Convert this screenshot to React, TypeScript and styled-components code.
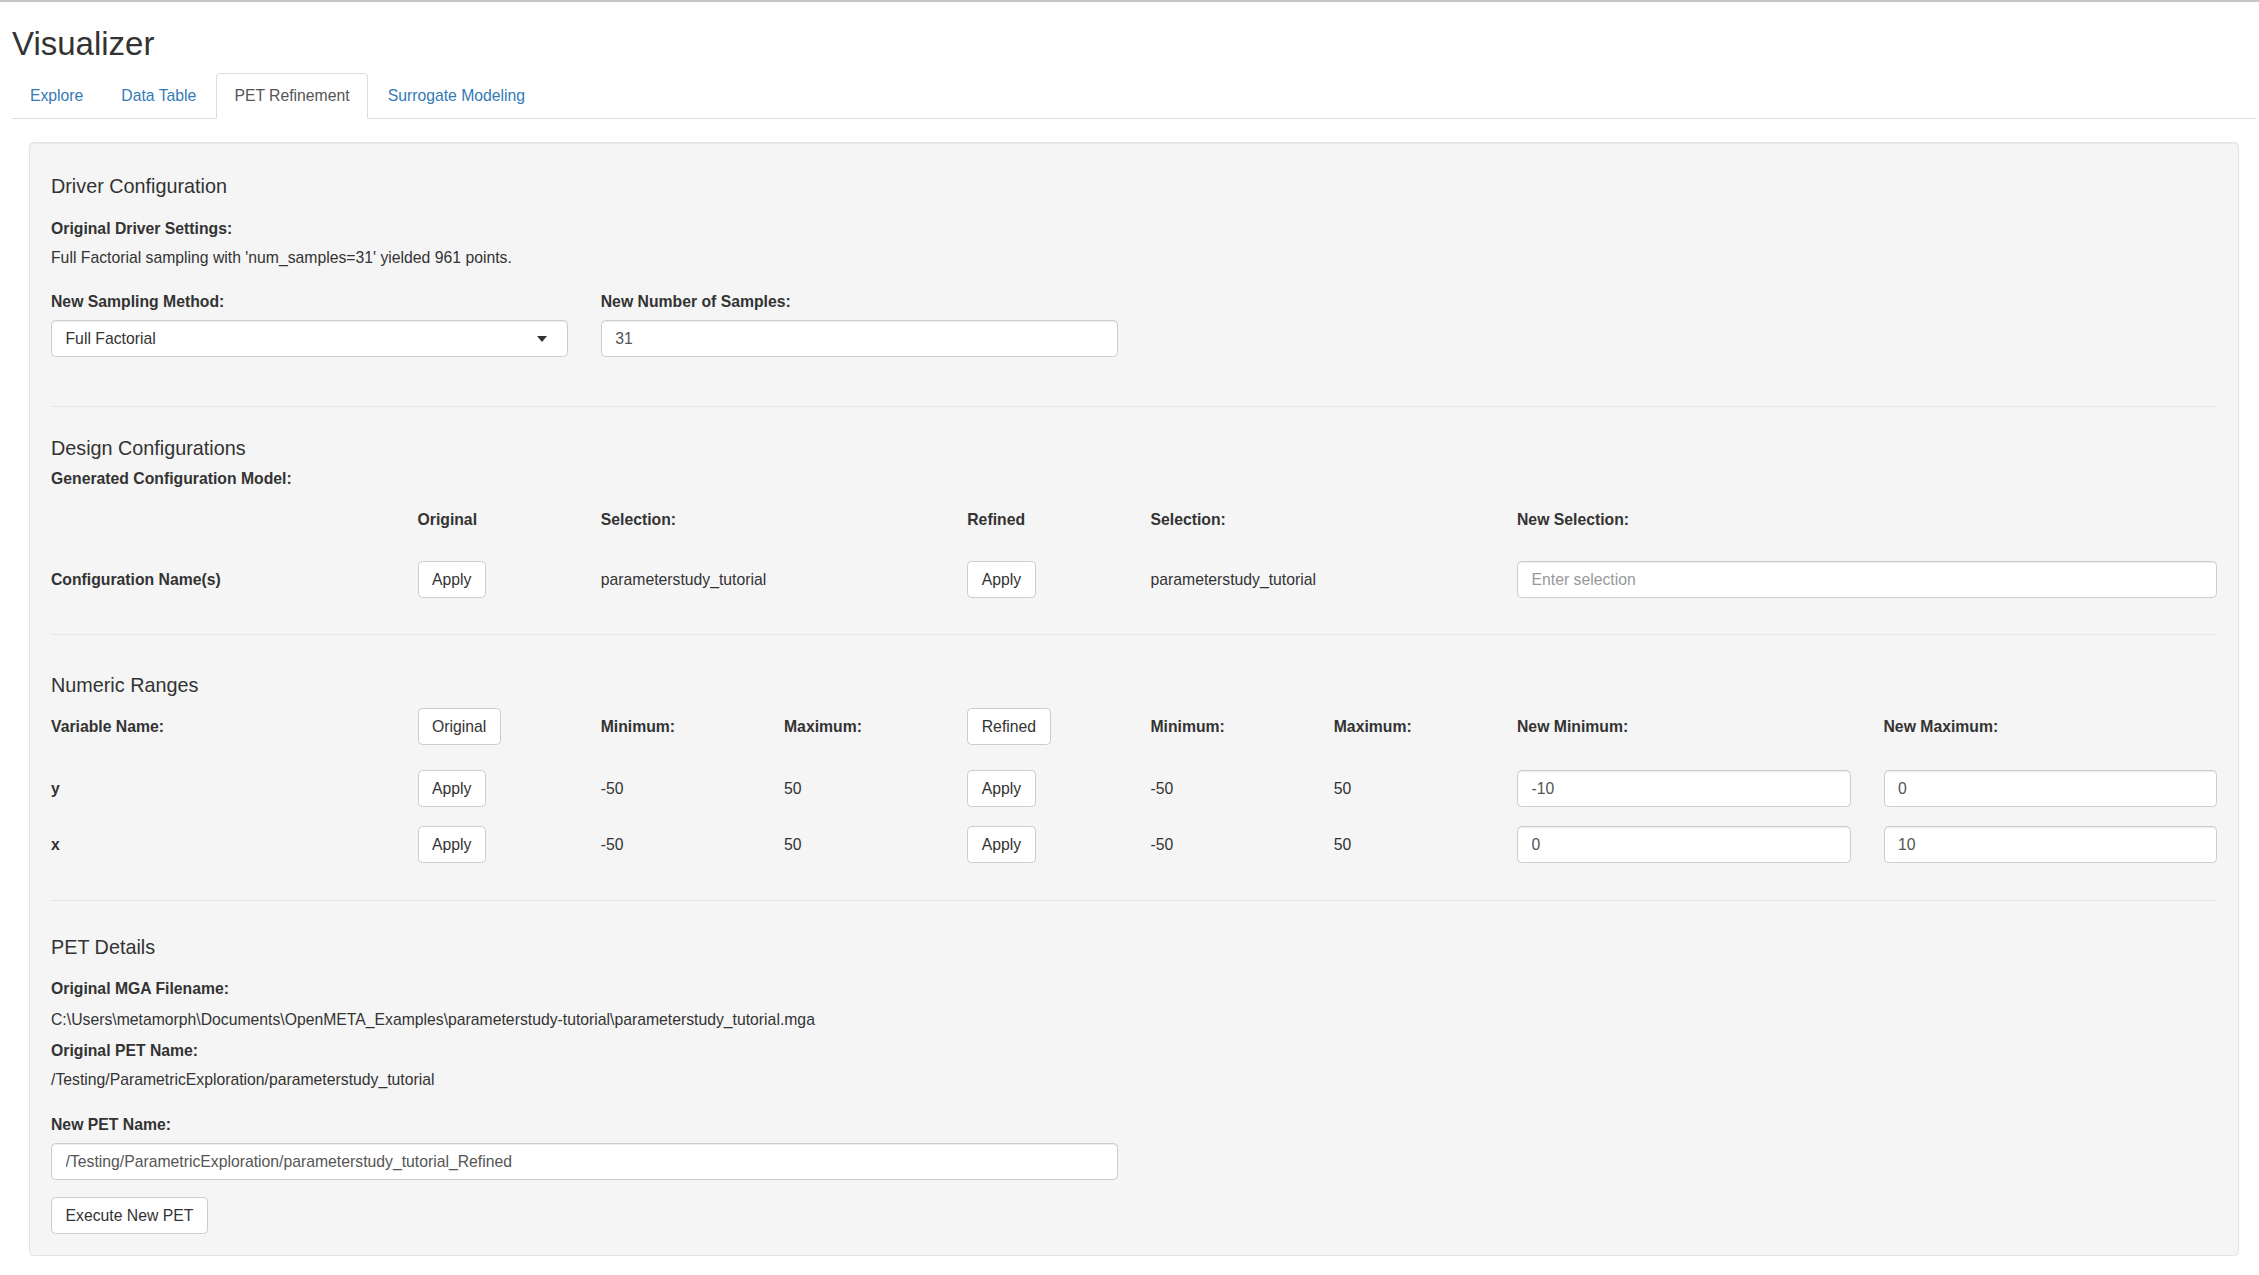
import React from 'react';
import styled, { createGlobalStyle } from 'styled-components';

const GlobalStyle = createGlobalStyle`
  html, body {
    margin: 0;
    padding: 0;
    background: #fff;
  }
  body {
    font-family: "Liberation Sans", Arial, Helvetica, sans-serif;
    font-size: 15.75px;
    line-height: 22px;
    color: #333;
  }
  *, *::before, *::after {
    box-sizing: border-box;
  }
`;

const Page = styled.div`
  border-top: 2px solid #c6c6c6;
  padding: 24px 3px 19px 12px;
`;

const Title = styled.h2`
  margin: 0 0 11px;
  font-size: 33px;
  line-height: 36.3px;
  font-weight: 400;
  color: #333;
`;

const TabList = styled.ul`
  display: flex;
  margin: 0;
  padding: 0;
  list-style: none;
  border-bottom: 1px solid #ddd;
`;

const Tab = styled.li<{ $active?: boolean }>`
  margin: 0 2.25px -1px 0;
  padding: 11px 16.9px;
  line-height: 22px;
  border: 1px solid ${({ $active }) => ($active ? '#ddd' : 'transparent')};
  border-bottom-color: transparent;
  border-radius: 4.5px 4.5px 0 0;
  background: ${({ $active }) => ($active ? '#fff' : 'transparent')};
  color: ${({ $active }) => ($active ? '#555' : '#337ab7')};
  cursor: pointer;
`;

const Well = styled.div`
  margin: 23px 17px 0;
  padding: 21px;
  background: #f5f5f5;
  border: 1px solid #e3e3e3;
  border-radius: 4.5px;
  box-shadow: inset 0 1px 1px rgba(0, 0, 0, 0.05);
`;

const SectionTitle = styled.h4<{ $top: number }>`
  margin: ${({ $top }) => $top}px 0 0;
  font-size: 19.8px;
  line-height: 22px;
  font-weight: 400;
  color: #333;
`;

const FieldLabel = styled.div<{ $top?: number }>`
  margin-top: ${({ $top }) => $top ?? 0}px;
  font-weight: 700;
  line-height: 22px;
`;

const Text = styled.div<{ $top?: number }>`
  margin-top: ${({ $top }) => $top ?? 0}px;
  line-height: 22px;
`;

const Divider = styled.hr<{ $top: number }>`
  margin: ${({ $top }) => $top}px 0 0;
  border: 0;
  border-top: 1px solid #e6e6e6;
  height: 0;
`;

const Grid = styled.div<{ $top: number }>`
  display: grid;
  grid-template-columns: repeat(12, minmax(0, 1fr));
  column-gap: 33px;
  align-items: center;
  margin-top: ${({ $top }) => $top}px;
`;

const Cell = styled.div<{ $col: number; $span?: number }>`
  grid-column: ${({ $col, $span }) => `${$col + 1} / span ${$span ?? 1}`};
  min-width: 0;
`;

const Bold = styled.span`
  font-weight: 700;
`;

const TextInput = styled.input`
  display: block;
  width: 100%;
  height: 37px;
  padding: 0 13.5px;
  font-family: inherit;
  font-size: 15.75px;
  color: #555;
  background: #fff;
  border: 1px solid #ccc;
  border-radius: 4.5px;
  box-shadow: inset 0 1px 1px rgba(0, 0, 0, 0.075);
  outline: none;
  &::placeholder {
    color: #999;
  }
`;

const SelectBox = styled.div`
  position: relative;
  height: 37px;
  padding: 0 13.5px;
  display: flex;
  align-items: center;
  color: #333;
  background: #fff;
  border: 1px solid #ccc;
  border-radius: 4.5px;
  box-shadow: inset 0 1px 1px rgba(0, 0, 0, 0.075);
  &::after {
    content: '';
    position: absolute;
    right: 20px;
    top: 50%;
    margin-top: -3px;
    border-style: solid;
    border-width: 6px 5px 0 5px;
    border-color: #333 transparent transparent transparent;
  }
`;

const Button = styled.button`
  height: 37px;
  padding: 0 13.5px;
  font-family: inherit;
  font-size: 15.75px;
  color: #333;
  background: #fff;
  border: 1px solid #ccc;
  border-radius: 4.5px;
  cursor: pointer;
`;

const FieldControl = styled.div`
  margin-top: 7px;
`;

type RangeRow = {
  name: string;
  min: string;
  max: string;
  refMin: string;
  refMax: string;
  newMin: string;
  newMax: string;
  top: number;
};

const ranges: RangeRow[] = [
  { name: 'y', min: '-50', max: '50', refMin: '-50', refMax: '50', newMin: '-10', newMax: '0', top: 25 },
  { name: 'x', min: '-50', max: '50', refMin: '-50', refMax: '50', newMin: '0', newMax: '10', top: 19 },
];

const tabs = ['Explore', 'Data Table', 'PET Refinement', 'Surrogate Modeling'];

export default function App() {
  return (
    <>
      <GlobalStyle />
      <Page>
        <Title>Visualizer</Title>
        <TabList>
          {tabs.map((t) => (
            <Tab key={t} $active={t === 'PET Refinement'}>
              {t}
            </Tab>
          ))}
        </TabList>

        <Well>
          {/* Driver configuration */}
          <SectionTitle $top={11}>Driver Configuration</SectionTitle>
          <FieldLabel $top={21}>Original Driver Settings:</FieldLabel>
          <Text $top={7}>Full Factorial sampling with 'num_samples=31' yielded 961 points.</Text>
          <Grid $top={22}>
            <Cell $col={0} $span={3}>
              <FieldLabel>New Sampling Method:</FieldLabel>
              <FieldControl>
                <SelectBox>Full Factorial</SelectBox>
              </FieldControl>
            </Cell>
            <Cell $col={3} $span={3}>
              <FieldLabel>New Number of Samples:</FieldLabel>
              <FieldControl>
                <TextInput defaultValue="31" />
              </FieldControl>
            </Cell>
          </Grid>

          <Divider $top={49} />

          {/* Design configurations */}
          <SectionTitle $top={30}>Design Configurations</SectionTitle>
          <FieldLabel $top={9}>Generated Configuration Model:</FieldLabel>
          <Grid $top={19}>
            <Cell $col={2}><Bold>Original</Bold></Cell>
            <Cell $col={3} $span={2}><Bold>Selection:</Bold></Cell>
            <Cell $col={5}><Bold>Refined</Bold></Cell>
            <Cell $col={6} $span={2}><Bold>Selection:</Bold></Cell>
            <Cell $col={8} $span={4}><Bold>New Selection:</Bold></Cell>
          </Grid>
          <Grid $top={30}>
            <Cell $col={0} $span={2}><Bold>Configuration Name(s)</Bold></Cell>
            <Cell $col={2}><Button>Apply</Button></Cell>
            <Cell $col={3} $span={2}>parameterstudy_tutorial</Cell>
            <Cell $col={5}><Button>Apply</Button></Cell>
            <Cell $col={6} $span={2}>parameterstudy_tutorial</Cell>
            <Cell $col={8} $span={4}><TextInput placeholder="Enter selection" /></Cell>
          </Grid>

          <Divider $top={36} />

          {/* Numeric ranges */}
          <SectionTitle $top={39}>Numeric Ranges</SectionTitle>
          <Grid $top={12}>
            <Cell $col={0} $span={2}><Bold>Variable Name:</Bold></Cell>
            <Cell $col={2}><Button>Original</Button></Cell>
            <Cell $col={3}><Bold>Minimum:</Bold></Cell>
            <Cell $col={4}><Bold>Maximum:</Bold></Cell>
            <Cell $col={5}><Button>Refined</Button></Cell>
            <Cell $col={6}><Bold>Minimum:</Bold></Cell>
            <Cell $col={7}><Bold>Maximum:</Bold></Cell>
            <Cell $col={8} $span={2}><Bold>New Minimum:</Bold></Cell>
            <Cell $col={10} $span={2}><Bold>New Maximum:</Bold></Cell>
          </Grid>
          {ranges.map((r) => (
            <Grid key={r.name} $top={r.top}>
              <Cell $col={0} $span={2}><Bold>{r.name}</Bold></Cell>
              <Cell $col={2}><Button>Apply</Button></Cell>
              <Cell $col={3}>{r.min}</Cell>
              <Cell $col={4}>{r.max}</Cell>
              <Cell $col={5}><Button>Apply</Button></Cell>
              <Cell $col={6}>{r.refMin}</Cell>
              <Cell $col={7}>{r.refMax}</Cell>
              <Cell $col={8} $span={2}><TextInput defaultValue={r.newMin} /></Cell>
              <Cell $col={10} $span={2}><TextInput defaultValue={r.newMax} /></Cell>
            </Grid>
          ))}

          <Divider $top={37} />

          {/* PET details */}
          <SectionTitle $top={35}>PET Details</SectionTitle>
          <FieldLabel $top={20}>Original MGA Filename:</FieldLabel>
          <Text $top={9}>C:\Users\metamorph\Documents\OpenMETA_Examples\parameterstudy-tutorial\parameterstudy_tutorial.mga</Text>
          <FieldLabel $top={9}>Original PET Name:</FieldLabel>
          <Text $top={7}>/Testing/ParametricExploration/parameterstudy_tutorial</Text>
          <Grid $top={23}>
            <Cell $col={0} $span={6}>
              <FieldLabel>New PET Name:</FieldLabel>
              <FieldControl>
                <TextInput defaultValue="/Testing/ParametricExploration/parameterstudy_tutorial_Refined" />
              </FieldControl>
            </Cell>
          </Grid>
          <Grid $top={17}>
            <Cell $col={0} $span={3}>
              <Button>Execute New PET</Button>
            </Cell>
          </Grid>
        </Well>
      </Page>
    </>
  );
}
